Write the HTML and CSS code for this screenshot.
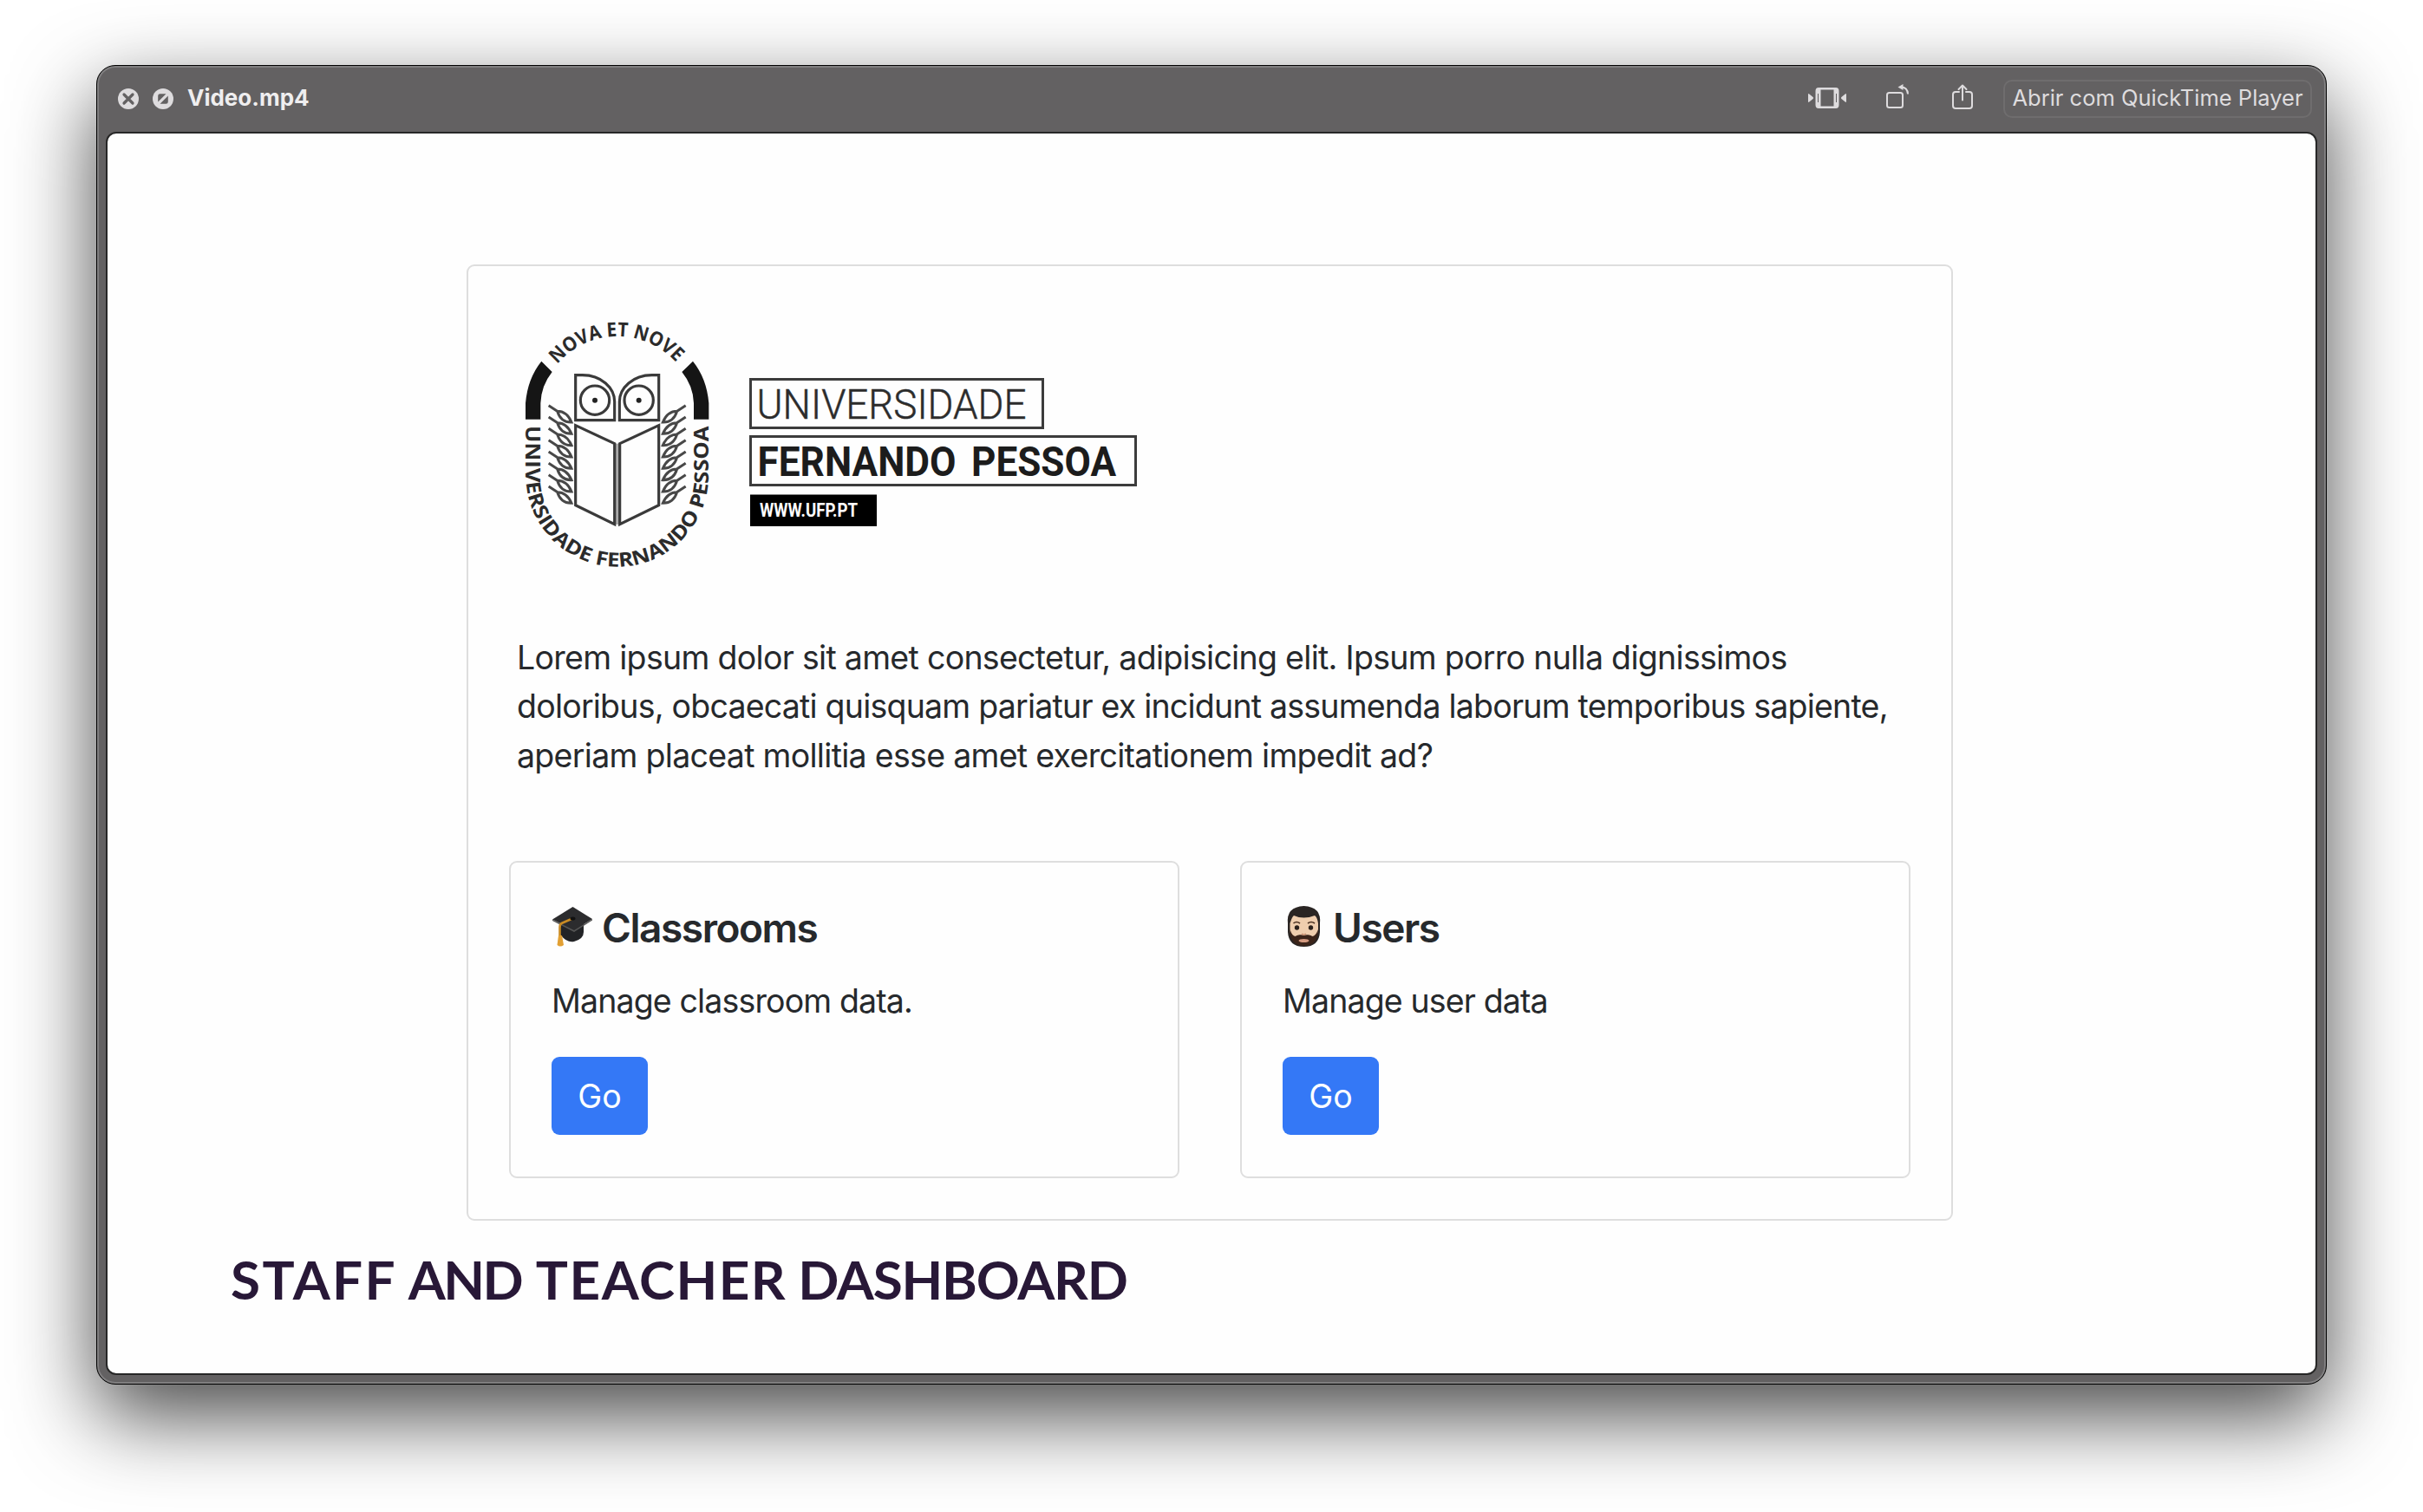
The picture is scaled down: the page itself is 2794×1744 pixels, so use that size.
FILE: index.html
```html
<!DOCTYPE html>
<html lang="pt">
<head>
<meta charset="utf-8">
<title>Video.mp4</title>
<link rel="stylesheet" href="styles.css">
</head>
<body>
<main class="window">
  <header class="titlebar">
    <svg class="control" viewBox="0 0 24 24"><circle cx="12" cy="12" r="12" fill="#dedcde"/><path d="M7 7l10 10M17 7L7 17" stroke="#636162" stroke-width="3.2" stroke-linecap="round"/></svg>
    <svg class="control" viewBox="0 0 24 24"><circle cx="12" cy="12" r="12" fill="#dedcde"/><path d="M6.2 15.5V8.6Q6.2 6.2 8.6 6.2H15.500ZM17.800 8.500V15.400Q17.800 17.800 15.400 17.800H8.500Z" fill="#636162"/></svg>
    <h1 class="filename">Video.mp4</h1>
    <svg class="tool tool-fit" viewBox="0 0 44 24"><path d="M0 8q0-1.500 1.300-.6L5.600 11q1 1 0 2L1.300 16.600Q0 17.500 0 16ZM44 8q0-1.500-1.300-.6L38.400 11q-1 1 0 2l4.300 3.600Q44 17.500 44 16Z" fill="#dedcde"/><path fill-rule="evenodd" d="M12 0H32q3.500 0 3.500 4V20q0 4-3.500 4H12q-3.500 0-3.500-4V4q0-4 3.500-4ZM14.500 2.500V21.500H29.500V2.500ZM11 7V17h1V7ZM32 7V17h1V7Z" fill="#dedcde"/></svg>
    <svg class="tool tool-rotate" viewBox="0 0 26 28"><rect x="1" y="10" width="18" height="17" rx="2.500" fill="none" stroke="#dedcde" stroke-width="2"/><path d="M17 3.500q7.600 0 8 8" fill="none" stroke="#dedcde" stroke-width="2"/><path d="M13.500 3.500L19.500 0V7Z" fill="#dedcde"/></svg>
    <svg class="tool tool-share" viewBox="0 0 24 29"><path d="M8 9H4Q1 9 1 12V25Q1 28 4 28H20Q23 28 23 25V12Q23 9 20 9H16M12 18.500V1.500M7.500 6L12 1.500L16.500 6" fill="none" stroke="#dedcde" stroke-width="2" stroke-linecap="round" stroke-linejoin="round"/></svg>
    <button class="open-with">Abrir com QuickTime Player</button>
  </header>
  <section class="video">
    <article class="panel">
      <div class="brand">
        <svg class="seal" viewBox="0 0 780 960">
          <defs>
            <path id="ring-top" d="M188 211A271 271 0 0 1 620 232"/>
            <path id="ring-bottom" d="M79 423V595A316 316 0 0 0 711 595V400"/>
            <g id="leaf"><path d="M158 353L190 374M188 373Q221 373 237 411Q200 412 188 373Z"/></g>
            <g id="branch">
              <use href="#leaf"/><use href="#leaf" y="40"/><use href="#leaf" y="80"/><use href="#leaf" y="120"/>
              <use href="#leaf" y="160"/><use href="#leaf" y="200"/><use href="#leaf" y="240"/><use href="#leaf" y="280"/>
            </g>
          </defs>
          <text class="seal-text"><textPath href="#ring-top" textLength="466" lengthAdjust="spacingAndGlyphs">NOVA ET NOVE</textPath></text>
          <text class="seal-text"><textPath href="#ring-bottom" textLength="1335" lengthAdjust="spacingAndGlyphs">UNIVERSIDADE FERNANDO PESSOA</textPath></text>
          <path d="M78 401V345Q85 260 133 200L170 237Q132 285 130 345V401ZM712 401V345Q705 260 657 200L619 237Q658 285 660 345V401Z" fill="#151515"/>
          <rect x="387" y="485" width="16" height="280" fill="#aaa"/>
          <g fill="none" stroke="#3a3a3a" stroke-width="9.500">
            <path d="M251 248H275C340 248 386 292 386 340V404H251ZM539 248H515C450 248 403 292 403 340V404H539Z"/>
            <circle cx="318" cy="335" r="50"/><circle cx="470" cy="335" r="50"/>
            <path d="M251 422L386 485V764L251 698ZM539 422L404 485V764L539 698Z"/>
          </g>
          <circle cx="318" cy="335" r="9" fill="#222"/><circle cx="470" cy="335" r="9" fill="#222"/>
          <g fill="none" stroke="#484848" stroke-width="9">
            <use href="#branch"/><use href="#branch" transform="translate(790 0) scale(-1 1)"/>
          </g>
        </svg>
        <svg class="wordmark" viewBox="0 0 450 174">
          <g fill="none" stroke="#3c3c3c" stroke-width="3"><rect x="1.500" y="1.500" width="337" height="56"/><rect x="1.500" y="67.500" width="444" height="56"/></g>
          <rect x="1" y="134.500" width="146" height="36.500" fill="#000"/>
          <text class="wm wm-light" x="8.500" y="46.500" textLength="311" lengthAdjust="spacingAndGlyphs">UNIVERSIDADE</text>
          <text class="wm wm-bold" x="9.500" y="113" textLength="229" lengthAdjust="spacingAndGlyphs">FERNANDO</text>
          <text class="wm wm-bold" x="256" y="113" textLength="167" lengthAdjust="spacingAndGlyphs">PESSOA</text>
          <text class="wm wm-url" x="12" y="160" textLength="113" lengthAdjust="spacingAndGlyphs">WWW.UFP.PT</text>
        </svg>
      </div>
      <p class="intro"><span class="line-1">Lorem ipsum dolor sit amet consectetur, adipisicing elit. Ipsum porro nulla dignissimos</span><br><span class="line-2">doloribus, obcaecati quisquam pariatur ex incidunt assumenda laborum temporibus sapiente,</span><br><span class="line-3">aperiam placeat mollitia esse amet exercitationem impedit ad?</span></p>
      <div class="cards">
        <div class="card">
          <h2 class="card-title">
            <svg class="emoji" viewBox="0 0 48 48">
              <path d="M10 19V33Q18 43 26 41Q37 38 37 30V20Z" fill="#222326"/>
              <path d="M1 15.500L24.500 1L47 15L26 28Z" fill="#2c2c2e"/><path d="M1 15.500L26 28L47 15V16.500L26 30L1 17Z" fill="#555"/>
              <path d="M24 14.500L11.500 20Q9.500 21 9.500 25V36" fill="none" stroke="#c98b24" stroke-width="2.600"/>
              <ellipse cx="24.500" cy="14.500" rx="3" ry="2" fill="#111"/>
              <path d="M8 34H12L14 45Q10 48 6.500 45Z" fill="#e2a033"/>
            </svg>
            <span class="card-name">Classrooms</span>
          </h2>
          <p class="card-text">Manage classroom data.</p>
          <button class="go">Go</button>
        </div>
        <div class="card">
          <h2 class="card-title">
            <svg class="emoji" viewBox="0 0 48 48">
              <path d="M6 20Q4 1 24.500 0Q45 1 43 20V30Q42 47 24.500 47Q7 47 6 30Z" fill="#2a2523"/>
              <path d="M8.500 20Q11 12 13 11Q24 16 37 11Q40 13 41 20V29Q39 36 36 36Q32 33 24.500 34Q17 33 13 36Q9 34 8.500 29Z" fill="#efceae"/>
              <path d="M8.500 27Q11 35 15 35Q18 32 24.500 34Q31 32 34 35Q38 35 41 27Q41 45 24.500 46Q8 45 8.500 27Z" fill="#3b2419"/>
              <ellipse cx="24.500" cy="40" rx="6" ry="2" fill="#d49a80"/>
              <path d="M12.500 20Q16 17 20 20M29 20Q33 17 37 20" fill="none" stroke="#4a3020" stroke-width="1.600"/>
              <circle cx="16.500" cy="25" r="2.700" fill="#2b211c"/><circle cx="32.500" cy="25" r="2.700" fill="#2b211c"/>
              <path d="M22 32Q24.500 34 27 32" fill="none" stroke="#c98f70" stroke-width="1.500"/>
            </svg>
            <span class="card-name">Users</span>
          </h2>
          <p class="card-text">Manage user data</p>
          <button class="go">Go</button>
        </div>
      </div>
    </article>
    <h2 class="caption"><span class="w1">STAFF</span> <span class="w2">AND</span> <span class="w3">TEACHER</span> <span class="w4">DASHBOARD</span></h2>
  </section>
</main>
</body>
</html>
```
FILE: styles.css
```css
* { box-sizing: border-box; }

body {
  margin: 0;
  height: 1744px;
  padding: 75px 111px 147px;
  background: #fff;
  font-family: Inter, "Liberation Sans", sans-serif;
  overflow: hidden;
}

h1, h2, p { margin: 0; }
button { font-family: inherit; cursor: pointer; }
svg { display: block; flex: none; }

.window {
  height: 1522px;
  padding: 0 10px 10px;
  border: 1px solid #000;
  border-radius: 22px;
  background: #636162;
  box-shadow: inset 0 0 0 2px #807f80, 0 36px 96px rgba(0, 0, 0, .72);
}

/* title bar */
.titlebar {
  display: flex;
  align-items: center;
  height: 76px;
  padding: 0 6px 0 14px;
}
.control { width: 24px; height: 24px; margin-right: 16px; }
.filename {
  margin: 0 auto 3px 0;
  font-size: 26px;
  line-height: 32px;
  font-weight: 700;
  color: #efeeef;
  white-space: nowrap;
}
.tool-fit { width: 44px; height: 24px; margin: 0 46px 2px 0; }
.tool-rotate { width: 26px; height: 28px; margin: 0 50px 6px 0; }
.tool-share { width: 24px; height: 29px; margin: 0 35px 5px 0; }
.open-with {
  width: 356px;
  height: 44px;
  padding: 0 0 3px;
  border: 2px solid #6f6d6e;
  border-radius: 10px;
  background: transparent;
  color: #dedcde;
  font-size: 25.500px;
  white-space: nowrap;
}

/* video frame */
.video {
  height: 1434px;
  padding: 151px 0 0 414px;
  border: 2px solid #272727;
  border-radius: 12px;
  background: #fefefe;
  color: #26292c;
}
.panel {
  width: 1714px;
  height: 1103px;
  padding: 43px 46px 0 47px;
  border: 2px solid #dedede;
  border-radius: 9px;
}
.brand { display: flex; height: 320px; margin-left: -7px; }
.seal { width: 260px; height: 320px; }
.wordmark { width: 450px; height: 174px; margin: 86px 0 0 24px; }
.seal-text {
  font: 700 68px "Open Sans", "Noto Sans", sans-serif;
  fill: #2b2b2b;
}
.wm { font-family: Roboto, sans-serif; }
.wm-light { font-size: 48px; font-weight: 300; fill: #2c2c2c; stroke: #2c2c2c; stroke-width: .5px; }
.wm-bold { font-size: 48px; font-weight: 700; fill: #1c1c1c; }
.wm-url { font-size: 22px; font-weight: 700; fill: #fff; }

.intro {
  height: 254px;
  margin-top: 61px;
  padding-left: 9px;
  font-size: 37.500px;
  line-height: 56.300px;
  white-space: nowrap;
}
.line-1 { letter-spacing: -.7px; }
.line-2 { letter-spacing: -.78px; }
.line-3 { letter-spacing: -.7px; }

.cards { display: flex; gap: 70px; margin-top: 8px; }
.card {
  width: 773px;
  height: 366px;
  padding: 45px 0 0 47px;
  border: 2px solid #dedede;
  border-radius: 9px;
}
.card-title {
  display: flex;
  align-items: center;
  gap: 10px;
  height: 60px;
  font-size: 46px;
  line-height: 59px;
  font-weight: 600;
}
.card-name { letter-spacing: -1.450px; }
.emoji { width: 48px; height: 48px; margin-bottom: 3px; }
.card-text {
  margin-top: 27px;
  font-size: 37.500px;
  line-height: 56px;
  letter-spacing: -.86px;
  white-space: nowrap;
}
.go {
  display: block;
  width: 111px;
  height: 90px;
  margin-top: 36px;
  padding: 0;
  border: 0;
  border-radius: 9px;
  background: #3478f6;
  color: #fff;
  font-size: 37.500px;
}

.caption {
  margin: 25px 0 0 -272px;
  font-family: Lato, sans-serif;
  font-weight: 700;
  font-size: 62px;
  line-height: 84px;
  color: #281837;
  white-space: nowrap;
}
.w1 { letter-spacing: 2.400px; margin-right: -2.400px; }
.w2 { letter-spacing: -2.500px; margin-right: 1.500px; }
.w3 { letter-spacing: 1.500px; margin-right: -2px; }
.w4 { letter-spacing: -1.200px; }
```
